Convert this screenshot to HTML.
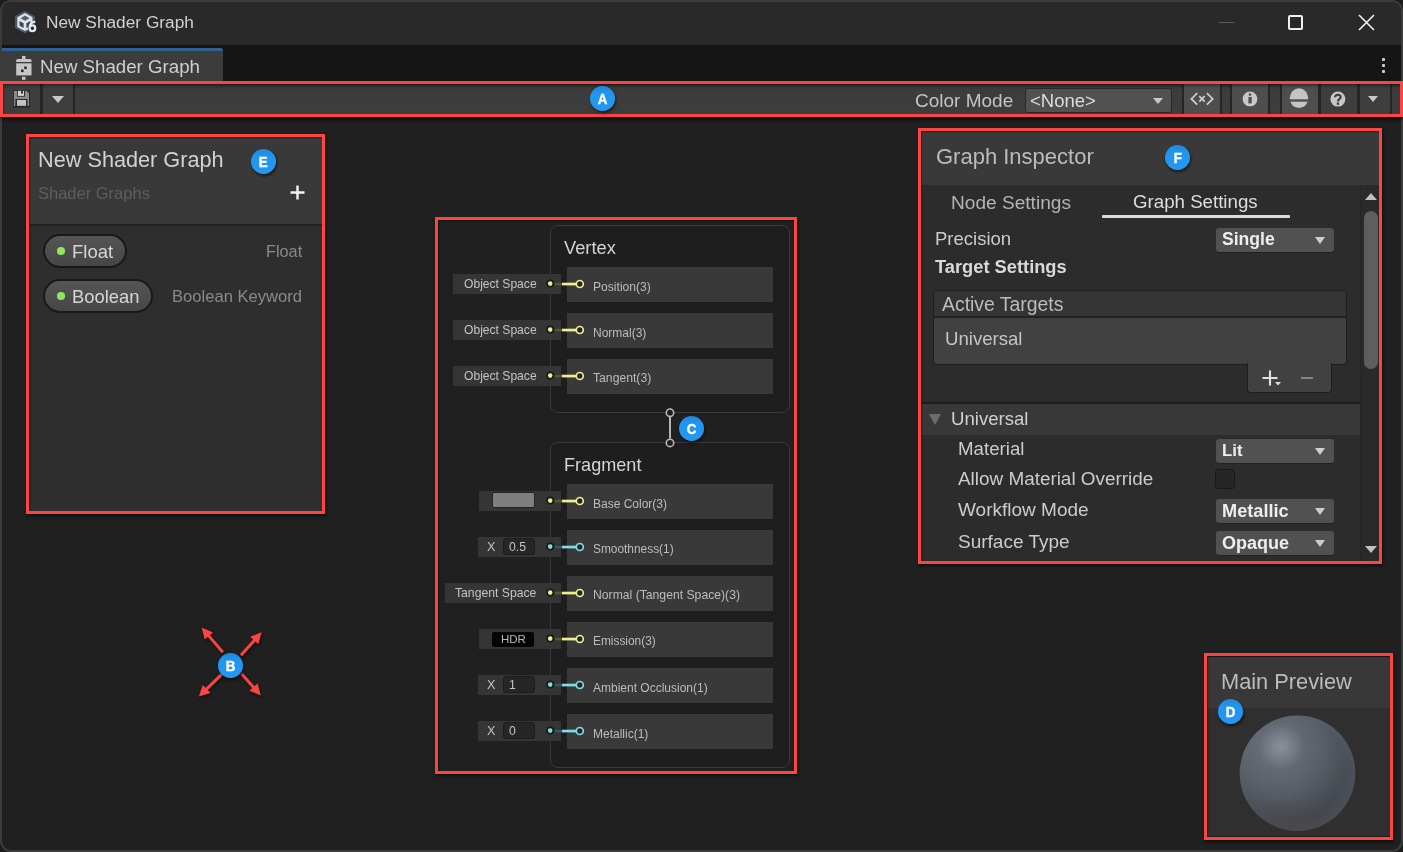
<!DOCTYPE html>
<html><head><meta charset="utf-8"><style>
html,body{margin:0;padding:0;width:1403px;height:852px;overflow:hidden;background:#1c1c1c;}
.r{position:absolute;}
.t{position:absolute;font-family:"Liberation Sans",sans-serif;white-space:pre;-webkit-font-smoothing:antialiased;will-change:transform;}
.badge{position:absolute;width:25px;height:25px;border-radius:50%;background:#2196ee;color:#fff;font-family:"Liberation Sans",sans-serif;font-weight:bold;font-size:15.5px;line-height:26px;text-align:center;-webkit-text-stroke:0.4px #fff;background:linear-gradient(#1f88da,#2196f0 30%,#2298f2);box-shadow:1px 2px 3px rgba(0,0,0,.6);z-index:70;will-change:transform}
.pill{position:absolute;border:2px solid #191919;border-radius:18px;background:linear-gradient(#555,#464646);}
</style></head><body>
<div class="r" style="left:0;top:0;width:1403px;height:852px;background:#3b3b3b;border-radius:11px"></div>
<div class="r" style="left:2px;top:2px;width:1399px;height:848px;background:#202020;border-radius:9px;overflow:hidden"></div>
<div class="r" style="left:2px;top:2px;width:1399px;height:43px;background:#292929;border-radius:9px 9px 0 0"></div>
<div class="t" style="top:14.4px;font-size:17.3px;line-height:17.3px;color:#d0d0d0;left:45.6px;">New Shader Graph</div>
<svg class="r" style="left:12px;top:8px" width="28" height="28" viewBox="12 8 28 28">
<polygon points="25,10.7 34.8,16.3 34.8,28 25,33.2 15,28 15,16.3" fill="#4c5866"/>
<polygon points="25,13 32.5,17.2 32.5,27 25,31 17.3,27 17.3,17.2" fill="#dce3ea"/>
<polygon points="25,15.5 29.5,18.2 25,20.8 20.5,18.2" fill="#56626e"/>
<polygon points="19.6,21 23.6,23.2 23.6,28 19.6,25.8" fill="#3c4650"/>
<polygon points="30.4,21 26.4,23.2 26.4,28 30.4,25.8" fill="#3c4650"/>
<ellipse cx="32.4" cy="28" rx="4.4" ry="4.6" fill="#262626"/>
<path d="M35.3 21.8 C31.5 21.5 29.6 24.5 29.6 27.8 C29.6 30.2 30.8 31.2 32.3 31.2 C34.3 31.2 35.2 29.6 35.2 28 C35.2 26.4 34.2 25.3 32.7 25.3 C31.6 25.3 30.8 25.9 30.4 26.6" stroke="#e6eaee" stroke-width="2.3" fill="none"/>
</svg>
<div class="r" style="left:1219px;top:22px;width:15px;height:1px;background:#5c5c5c;"></div>
<div class="r" style="left:1288px;top:15px;width:11px;height:11px;border:2px solid #f0f0f0;border-radius:2px"></div>
<svg class="r" style="left:1357px;top:13px" width="19" height="19" viewBox="0 0 19 19"><path d="M2 2 L17 17 M17 2 L2 17" stroke="#f0f0f0" stroke-width="1.6"/></svg>
<div class="r" style="left:2px;top:45px;width:1399px;height:36px;background:#151515;"></div>
<div class="r" style="left:2px;top:48px;width:221px;height:33px;background:#3c3c3c;border-radius:0 4px 0 0"></div>
<div class="r" style="left:2px;top:48px;width:221px;height:3px;background:#2e6296;border-radius:0 4px 0 0;"></div>
<div class="t" style="top:58.3px;font-size:18.7px;line-height:18.7px;color:#cfcfcf;left:40.0px;">New Shader Graph</div>
<svg class="r" style="left:12px;top:52px" width="24" height="30" viewBox="12 52 24 30">
<rect x="22" y="55.9" width="3.5" height="3.5" fill="#c6c6c6"/>
<path d="M16.2 61.9 V60.5 Q16.2 58.9 17.8 58.9 H29.9 Q31.5 58.9 31.5 60.5 V61.9 Z" fill="#c6c6c6"/>
<rect x="16.2" y="63.3" width="15.3" height="12.1" fill="#c6c6c6"/>
<rect x="24.2" y="66.5" width="2.6" height="2.6" fill="#2a2a2a"/>
<rect x="21" y="69.5" width="2.6" height="2.6" fill="#2a2a2a"/>
<rect x="22" y="76.8" width="3.5" height="3" fill="#c6c6c6"/>
</svg>
<div class="r" style="left:1382px;top:57.8px;width:3px;height:3px;background:#cfcfcf;border-radius:1px"></div>
<div class="r" style="left:1382px;top:63.8px;width:3px;height:3px;background:#cfcfcf;border-radius:1px"></div>
<div class="r" style="left:1382px;top:69.8px;width:3px;height:3px;background:#cfcfcf;border-radius:1px"></div>
<div class="r" style="left:2px;top:81px;width:1399px;height:36px;background:linear-gradient(#2e2e2e 0px,#2e2e2e 3px,#353535 4px,#3c3c3c 9px,#3d3d3d 100%);"></div>
<div class="r" style="left:2px;top:117px;width:1399px;height:7px;background:linear-gradient(#181818,#202020);"></div>
<div class="r" style="left:3px;top:84px;width:37px;height:30px;background:#3e3e3e;"></div>
<div class="r" style="left:40px;top:84px;width:3px;height:30px;background:#252525;"></div>
<div class="r" style="left:43px;top:84px;width:30px;height:30px;background:#3e3e3e;"></div>
<div class="r" style="left:73px;top:84px;width:2px;height:30px;background:#252525;"></div>
<svg class="r" style="left:8px;top:86px" width="28" height="26" viewBox="8 86 28 26">
<rect x="13" y="90" width="17" height="17.5" fill="#262626"/>
<rect x="13.9" y="90.9" width="15.1" height="15.1" fill="#8c8c8c"/>
<rect x="27.5" y="90.5" width="2" height="2" fill="#262626"/>
<rect x="17" y="90.9" width="8" height="5.8" fill="#2e2e2e"/>
<rect x="17.9" y="90.9" width="6.1" height="5" fill="#d0d0d0"/>
<rect x="21.1" y="90.9" width="1.8" height="2.8" fill="#2e2e2e"/>
<rect x="15.3" y="99" width="12.2" height="8.5" fill="#2a2a2a"/>
<rect x="17" y="100" width="9" height="5.8" fill="#c4c4c4"/>
</svg>
<div class="r" style="left:52px;top:96px;width:0;height:0;border-left:6px solid transparent;border-right:6px solid transparent;border-top:7px solid #c8c8c8"></div>
<div class="t" style="top:90.9px;font-size:19px;line-height:19px;color:#c4c4c4;left:915.4px;">Color Mode</div>
<div class="r" style="left:1024.5px;top:88px;width:145.5px;height:23px;background:#515151;border:1px solid #2a2a2a;border-radius:3px"></div>
<div class="t" style="top:91.9px;font-size:18.5px;line-height:18.5px;color:#dcdcdc;left:1030.3px;">&lt;None&gt;</div>
<div class="r" style="left:1152.5px;top:98px;width:0;height:0;border-left:5.7px solid transparent;border-right:5.7px solid transparent;border-top:6.8px solid #c8c8c8"></div>
<div class="r" style="left:1182px;top:84px;width:2px;height:30px;background:#252525;"></div>
<div class="r" style="left:1184px;top:84px;width:36px;height:30px;background:#4e4e4e;"></div>
<div class="r" style="left:1220px;top:84px;width:2px;height:30px;background:#252525;"></div>
<div class="r" style="left:1230px;top:84px;width:2px;height:30px;background:#252525;"></div>
<div class="r" style="left:1232px;top:84px;width:36px;height:30px;background:#4e4e4e;"></div>
<div class="r" style="left:1268px;top:84px;width:2px;height:30px;background:#252525;"></div>
<div class="r" style="left:1280px;top:84px;width:2px;height:30px;background:#252525;"></div>
<div class="r" style="left:1282px;top:84px;width:36px;height:30px;background:#4e4e4e;"></div>
<div class="r" style="left:1318px;top:84px;width:3px;height:30px;background:#252525;"></div>
<div class="r" style="left:1321px;top:84px;width:36px;height:30px;background:#3e3e3e;"></div>
<div class="r" style="left:1357px;top:84px;width:3px;height:30px;background:#252525;"></div>
<div class="r" style="left:1360px;top:84px;width:30px;height:30px;background:#3e3e3e;"></div>
<div class="r" style="left:1390px;top:84px;width:2px;height:30px;background:#252525;"></div>
<svg class="r" style="left:1184px;top:84px" width="36" height="30" viewBox="1184 84 36 30">
<path d="M1197.2 93.1 L1191.4 98.9 L1197.2 104.7 M1206.9 93.1 L1212.7 98.9 L1206.9 104.7" stroke="#cfcfcf" stroke-width="1.7" fill="none"/>
<path d="M1199.3 96.2 L1204.7 101.6 M1204.7 96.2 L1199.3 101.6" stroke="#cfcfcf" stroke-width="1.8" fill="none"/>
</svg>
<svg class="r" style="left:1232px;top:84px" width="36" height="30" viewBox="1232 84 36 30">
<circle cx="1250" cy="98.9" r="7.4" fill="#c8c8c8"/>
<circle cx="1250" cy="94.6" r="1.3" fill="#4f4f4f"/>
<rect x="1248.4" y="97" width="3.3" height="6.4" fill="#4f4f4f"/>
</svg>
<svg class="r" style="left:1282px;top:84px" width="36" height="30" viewBox="1282 84 36 30">
<ellipse cx="1299" cy="98.2" rx="9.2" ry="9.9" fill="#c4c4c4"/>
<rect x="1288" y="99.3" width="22" height="2.4" fill="#4f4f4f"/>
</svg>
<svg class="r" style="left:1321px;top:84px" width="36" height="30" viewBox="1321 84 36 30">
<circle cx="1337.9" cy="99.1" r="7.5" fill="#c8c8c8"/>
<path d="M1335.1 97.3 C1335.1 94 1340.7 94 1340.7 97.1 C1340.7 99.2 1337.9 99.1 1337.9 101.4" stroke="#3e3e3e" stroke-width="2.1" fill="none"/>
<rect x="1336.8" y="102.6" width="2.3" height="2.2" fill="#3e3e3e"/>
</svg>
<div class="r" style="left:1368.3px;top:96px;width:0;height:0;border-left:5.7px solid transparent;border-right:5.7px solid transparent;border-top:6.8px solid #c8c8c8"></div>
<div class="r" style="left:3px;top:84px;width:1397px;height:5px;background:linear-gradient(rgba(0,0,0,.2),rgba(0,0,0,0));"></div>
<div class="r" style="left:29px;top:137px;width:293px;height:87px;background:#393939;"></div>
<div class="r" style="left:29px;top:224px;width:293px;height:2px;background:#232323;"></div>
<div class="r" style="left:29px;top:226px;width:293px;height:285px;background:#2e2e2e;"></div>
<div class="t" style="top:148.7px;font-size:21.7px;line-height:21.7px;color:#d2d2d2;left:38.2px;">New Shader Graph</div>
<div class="t" style="top:185.0px;font-size:16.5px;line-height:16.5px;color:#5e5e5e;left:37.5px;">Shader Graphs</div>
<svg class="r" style="left:290px;top:185px" width="15" height="15" viewBox="0 0 15 15"><path d="M7.5 0.5 V14.5 M0.5 7.5 H14.5" stroke="#f4f4f4" stroke-width="2.4"/></svg>
<div class="pill" style="left:43px;top:234px;width:80px;height:30px"></div>
<div class="r" style="left:57px;top:247.2px;width:7.5px;height:7.5px;border-radius:50%;background:#8ee65e"></div>
<div class="t" style="top:242.5px;font-size:18.5px;line-height:18.5px;color:#d6d6d6;left:71.5px;">Float</div>
<div class="pill" style="left:43px;top:279px;width:106px;height:30px"></div>
<div class="r" style="left:57px;top:292.2px;width:7.5px;height:7.5px;border-radius:50%;background:#8ee65e"></div>
<div class="t" style="top:287.6px;font-size:18.4px;line-height:18.4px;color:#d6d6d6;left:71.5px;">Boolean</div>
<div class="t" style="top:243.3px;font-size:16.3px;line-height:16.3px;color:#8a8a8a;right:1101.0px;text-align:right;">Float</div>
<div class="t" style="top:288.7px;font-size:16.6px;line-height:16.6px;color:#8a8a8a;left:172.0px;">Boolean Keyword</div>
<div class="r" style="left:550px;top:225px;width:238px;height:186px;border:1px solid #3a3a3a;border-radius:8px;background:#1e1e1e"></div>
<div class="r" style="left:550px;top:442px;width:238px;height:324px;border:1px solid #3a3a3a;border-radius:8px;background:#1e1e1e"></div>
<div class="t" style="top:238.5px;font-size:18.3px;line-height:18.3px;color:#d4d4d4;left:564.0px;">Vertex</div>
<div class="t" style="top:455.8px;font-size:18.1px;line-height:18.1px;color:#d4d4d4;left:564.0px;">Fragment</div>
<div class="r" style="left:567px;top:267px;width:206px;height:35px;background:#393939;"></div>
<div class="r" style="left:453px;top:274px;width:108px;height:20px;background:#353535;"></div>
<div class="t" style="top:277.7px;font-size:12.1px;line-height:12.1px;color:#c4c4c4;right:866.0px;text-align:right;">Object Space</div>
<svg class="r" style="left:540px;top:274px" width="50" height="20" viewBox="540 274 50 20">
<rect x="555" y="282.8" width="7" height="2.5" fill="#55553f"/>
<rect x="562" y="282.7" width="14" height="2.7" fill="#eeee90"/>
<circle cx="550.2" cy="283.6" r="4" fill="#181818"/>
<circle cx="550.2" cy="283.6" r="2.3" fill="#eeee90"/>
<circle cx="579.8" cy="284" r="3.5" fill="#262626" stroke="#eeee90" stroke-width="1.7"/>
</svg>
<div class="t" style="top:280.5px;font-size:12.1px;line-height:12.1px;color:#bcbcbc;left:593.2px;">Position(3)</div>
<div class="r" style="left:567px;top:313px;width:206px;height:35px;background:#393939;"></div>
<div class="r" style="left:453px;top:320px;width:108px;height:20px;background:#353535;"></div>
<div class="t" style="top:323.7px;font-size:12.1px;line-height:12.1px;color:#c4c4c4;right:866.0px;text-align:right;">Object Space</div>
<svg class="r" style="left:540px;top:320px" width="50" height="20" viewBox="540 320 50 20">
<rect x="555" y="328.8" width="7" height="2.5" fill="#55553f"/>
<rect x="562" y="328.7" width="14" height="2.7" fill="#eeee90"/>
<circle cx="550.2" cy="329.6" r="4" fill="#181818"/>
<circle cx="550.2" cy="329.6" r="2.3" fill="#eeee90"/>
<circle cx="579.8" cy="330" r="3.5" fill="#262626" stroke="#eeee90" stroke-width="1.7"/>
</svg>
<div class="t" style="top:326.6px;font-size:12.0px;line-height:12.0px;color:#bcbcbc;left:593.2px;">Normal(3)</div>
<div class="r" style="left:567px;top:359px;width:206px;height:35px;background:#393939;"></div>
<div class="r" style="left:453px;top:366px;width:108px;height:20px;background:#353535;"></div>
<div class="t" style="top:369.7px;font-size:12.1px;line-height:12.1px;color:#c4c4c4;right:866.0px;text-align:right;">Object Space</div>
<svg class="r" style="left:540px;top:366px" width="50" height="20" viewBox="540 366 50 20">
<rect x="555" y="374.8" width="7" height="2.5" fill="#55553f"/>
<rect x="562" y="374.7" width="14" height="2.7" fill="#eeee90"/>
<circle cx="550.2" cy="375.6" r="4" fill="#181818"/>
<circle cx="550.2" cy="375.6" r="2.3" fill="#eeee90"/>
<circle cx="579.8" cy="376" r="3.5" fill="#262626" stroke="#eeee90" stroke-width="1.7"/>
</svg>
<div class="t" style="top:372.4px;font-size:12.2px;line-height:12.2px;color:#bcbcbc;left:593.2px;">Tangent(3)</div>
<div class="r" style="left:567px;top:484px;width:206px;height:35px;background:#393939;"></div>
<div class="r" style="left:479px;top:491px;width:82px;height:20px;background:#353535;"></div>
<div class="r" style="left:492px;top:492px;width:41px;height:14px;background:#7f7f7f;border:1px solid #242424;border-radius:2px"></div>
<svg class="r" style="left:540px;top:491px" width="50" height="20" viewBox="540 491 50 20">
<rect x="555" y="499.8" width="7" height="2.5" fill="#55553f"/>
<rect x="562" y="499.7" width="14" height="2.7" fill="#eeee90"/>
<circle cx="550.2" cy="500.6" r="4" fill="#181818"/>
<circle cx="550.2" cy="500.6" r="2.3" fill="#eeee90"/>
<circle cx="579.8" cy="501" r="3.5" fill="#262626" stroke="#eeee90" stroke-width="1.7"/>
</svg>
<div class="t" style="top:497.6px;font-size:12.0px;line-height:12.0px;color:#bcbcbc;left:593.2px;">Base Color(3)</div>
<div class="r" style="left:567px;top:530px;width:206px;height:35px;background:#393939;"></div>
<div class="r" style="left:478px;top:537px;width:83px;height:20px;background:#353535;"></div>
<div class="t" style="top:540.7px;font-size:12.6px;line-height:12.6px;color:#c4c4c4;left:487.3px;">X</div>
<div class="r" style="left:503px;top:538px;width:30px;height:15px;background:#262626;border:1px solid #1c1c1c;border-radius:3px"></div>
<div class="t" style="top:541.0px;font-size:12.2px;line-height:12.2px;color:#c4c4c4;left:508.6px;">0.5</div>
<svg class="r" style="left:540px;top:537px" width="50" height="20" viewBox="540 537 50 20">
<rect x="555" y="545.8" width="7" height="2.5" fill="#3f5557"/>
<rect x="562" y="545.7" width="14" height="2.7" fill="#7fdde6"/>
<circle cx="550.2" cy="546.6" r="4" fill="#181818"/>
<circle cx="550.2" cy="546.6" r="2.3" fill="#7fdde6"/>
<circle cx="579.8" cy="547" r="3.5" fill="#262626" stroke="#7fdde6" stroke-width="1.7"/>
</svg>
<div class="t" style="top:543.7px;font-size:11.9px;line-height:11.9px;color:#bcbcbc;left:593.2px;">Smoothness(1)</div>
<div class="r" style="left:567px;top:576px;width:206px;height:35px;background:#393939;"></div>
<div class="r" style="left:444.5px;top:583px;width:116.5px;height:20px;background:#353535;"></div>
<div class="t" style="top:586.6px;font-size:12.2px;line-height:12.2px;color:#c4c4c4;right:866.7px;text-align:right;">Tangent Space</div>
<svg class="r" style="left:540px;top:583px" width="50" height="20" viewBox="540 583 50 20">
<rect x="555" y="591.8" width="7" height="2.5" fill="#55553f"/>
<rect x="562" y="591.7" width="14" height="2.7" fill="#eeee90"/>
<circle cx="550.2" cy="592.6" r="4" fill="#181818"/>
<circle cx="550.2" cy="592.6" r="2.3" fill="#eeee90"/>
<circle cx="579.8" cy="593" r="3.5" fill="#262626" stroke="#eeee90" stroke-width="1.7"/>
</svg>
<div class="t" style="top:589.4px;font-size:12.2px;line-height:12.2px;color:#bcbcbc;left:593.2px;">Normal (Tangent Space)(3)</div>
<div class="r" style="left:567px;top:622px;width:206px;height:35px;background:#393939;"></div>
<div class="r" style="left:479px;top:629px;width:82px;height:20px;background:#353535;"></div>
<div class="r" style="left:492px;top:631.5px;width:42px;height:15px;background:#050505;border-radius:2px"></div>
<div class="t" style="top:634.0px;font-size:11.5px;line-height:11.5px;color:#b8b8b8;left:501.2px;">HDR</div>
<svg class="r" style="left:540px;top:629px" width="50" height="20" viewBox="540 629 50 20">
<rect x="555" y="637.8" width="7" height="2.5" fill="#55553f"/>
<rect x="562" y="637.7" width="14" height="2.7" fill="#eeee90"/>
<circle cx="550.2" cy="638.6" r="4" fill="#181818"/>
<circle cx="550.2" cy="638.6" r="2.3" fill="#eeee90"/>
<circle cx="579.8" cy="639" r="3.5" fill="#262626" stroke="#eeee90" stroke-width="1.7"/>
</svg>
<div class="t" style="top:635.7px;font-size:11.9px;line-height:11.9px;color:#bcbcbc;left:593.2px;">Emission(3)</div>
<div class="r" style="left:567px;top:668px;width:206px;height:35px;background:#393939;"></div>
<div class="r" style="left:478px;top:675px;width:83px;height:20px;background:#353535;"></div>
<div class="t" style="top:678.7px;font-size:12.6px;line-height:12.6px;color:#c4c4c4;left:487.3px;">X</div>
<div class="r" style="left:503px;top:676px;width:30px;height:15px;background:#262626;border:1px solid #1c1c1c;border-radius:3px"></div>
<div class="t" style="top:679.0px;font-size:12.2px;line-height:12.2px;color:#c4c4c4;left:508.6px;">1</div>
<svg class="r" style="left:540px;top:675px" width="50" height="20" viewBox="540 675 50 20">
<rect x="555" y="683.8" width="7" height="2.5" fill="#3f5557"/>
<rect x="562" y="683.7" width="14" height="2.7" fill="#7fdde6"/>
<circle cx="550.2" cy="684.6" r="4" fill="#181818"/>
<circle cx="550.2" cy="684.6" r="2.3" fill="#7fdde6"/>
<circle cx="579.8" cy="685" r="3.5" fill="#262626" stroke="#7fdde6" stroke-width="1.7"/>
</svg>
<div class="t" style="top:681.6px;font-size:12.0px;line-height:12.0px;color:#bcbcbc;left:593.2px;">Ambient Occlusion(1)</div>
<div class="r" style="left:567px;top:714px;width:206px;height:35px;background:#393939;"></div>
<div class="r" style="left:478px;top:721px;width:83px;height:20px;background:#353535;"></div>
<div class="t" style="top:724.7px;font-size:12.6px;line-height:12.6px;color:#c4c4c4;left:487.3px;">X</div>
<div class="r" style="left:503px;top:722px;width:30px;height:15px;background:#262626;border:1px solid #1c1c1c;border-radius:3px"></div>
<div class="t" style="top:725.0px;font-size:12.2px;line-height:12.2px;color:#c4c4c4;left:508.6px;">0</div>
<svg class="r" style="left:540px;top:721px" width="50" height="20" viewBox="540 721 50 20">
<rect x="555" y="729.8" width="7" height="2.5" fill="#3f5557"/>
<rect x="562" y="729.7" width="14" height="2.7" fill="#7fdde6"/>
<circle cx="550.2" cy="730.6" r="4" fill="#181818"/>
<circle cx="550.2" cy="730.6" r="2.3" fill="#7fdde6"/>
<circle cx="579.8" cy="731" r="3.5" fill="#262626" stroke="#7fdde6" stroke-width="1.7"/>
</svg>
<div class="t" style="top:727.6px;font-size:12.0px;line-height:12.0px;color:#bcbcbc;left:593.2px;">Metallic(1)</div>
<svg class="r" style="left:660px;top:402px" width="20" height="51" viewBox="0 0 20 51">
<path d="M10 14.5 V36.5" stroke="#b4b4b4" stroke-width="2"/>
<circle cx="10" cy="10.7" r="3.7" stroke="#b8b8b8" stroke-width="1.6" fill="#1e1e1e"/>
<circle cx="10" cy="40.9" r="3.7" stroke="#b8b8b8" stroke-width="1.6" fill="#1e1e1e"/>
</svg>
<div class="r" style="left:921px;top:131px;width:458px;height:54px;background:#393939;"></div>
<div class="r" style="left:921px;top:185px;width:458px;height:376px;background:#2c2c2c;"></div>
<div class="r" style="left:1360px;top:185px;width:19px;height:376px;background:#2a2a2a;border-left:1px solid #262626;"></div>
<div class="t" style="top:146.3px;font-size:22px;line-height:22px;color:#bcbcbc;left:935.8px;">Graph Inspector</div>
<div class="t" style="top:193.0px;font-size:19.1px;line-height:19.1px;color:#b4b4b4;left:950.8px;">Node Settings</div>
<div class="t" style="top:193.3px;font-size:18.7px;line-height:18.7px;color:#dedede;left:1132.7px;">Graph Settings</div>
<div class="r" style="left:1102px;top:215px;width:188px;height:3px;background:#dcdcdc;border-radius:1px;"></div>
<div class="r" style="left:1365px;top:193px;width:0;height:0;border-left:6px solid transparent;border-right:6px solid transparent;border-bottom:7px solid #c0c0c0"></div>
<div class="r" style="left:1364px;top:211px;width:14px;height:158px;background:#5e5e5e;border-radius:7px"></div>
<div class="r" style="left:1365px;top:546px;width:0;height:0;border-left:6px solid transparent;border-right:6px solid transparent;border-top:7px solid #c0c0c0"></div>
<div class="t" style="top:229.8px;font-size:18.5px;line-height:18.5px;color:#cccccc;left:934.6px;">Precision</div>
<div class="r" style="left:1216px;top:228px;width:118px;height:24px;background:#515151;border-radius:3px;box-shadow:0 1px 0 #202020"></div>
<div class="t" style="top:231.4px;font-size:17.6px;line-height:17.6px;color:#eeeeee;left:1221.6px;font-weight:bold;">Single</div>
<div class="r" style="left:1314.5px;top:236.5px;width:0;height:0;border-left:5.5px solid transparent;border-right:5.5px solid transparent;border-bottom:0;border-top:7px solid #cfcfcf"></div>
<div class="t" style="top:258.4px;font-size:18.3px;line-height:18.3px;color:#dadada;left:935.2px;font-weight:bold;">Target Settings</div>
<div class="r" style="left:933px;top:290px;width:412px;height:73px;background:#414141;border:1px solid #1e1e1e;border-radius:4px"></div>
<div class="r" style="left:934px;top:291px;width:412px;height:25px;background:#343434;border-bottom:2px solid #222222;border-radius:3px 3px 0 0"></div>
<div class="t" style="top:294.7px;font-size:19.4px;line-height:19.4px;color:#bcbcbc;left:942.3px;">Active Targets</div>
<div class="t" style="top:330.2px;font-size:18.6px;line-height:18.6px;color:#c4c4c4;left:944.5px;">Universal</div>
<div class="r" style="left:1247px;top:363px;width:83px;height:29px;background:#414141;border:1px solid #1e1e1e;border-top:none;border-radius:0 0 4px 4px"></div>
<div class="r" style="left:1248px;top:361px;width:82px;height:4px;background:#414141;"></div>
<svg class="r" style="left:1261px;top:369px" width="26" height="20" viewBox="0 0 26 20"><path d="M9 1.5 V16.5 M1.5 9 H16.5" stroke="#e2e2e2" stroke-width="2.1"/><path d="M14 13 L20 13 L17 16.5 Z" fill="#dddddd"/></svg>
<div class="r" style="left:1301px;top:377px;width:12px;height:2px;background:#858585;"></div>
<div class="r" style="left:921px;top:402px;width:439px;height:2px;background:#1e1e1e;"></div>
<div class="r" style="left:921px;top:404px;width:439px;height:31px;background:#383838;"></div>
<div class="r" style="left:929px;top:414px;width:0;height:0;border-left:6px solid transparent;border-right:6px solid transparent;border-top:11px solid #6c6c6c"></div>
<div class="t" style="top:409.8px;font-size:18.6px;line-height:18.6px;color:#d0d0d0;left:950.8px;">Universal</div>
<div class="t" style="top:440.2px;font-size:18.7px;line-height:18.7px;color:#cccccc;left:957.8px;">Material</div>
<div class="t" style="top:470.0px;font-size:18.9px;line-height:18.9px;color:#cccccc;left:957.8px;">Allow Material Override</div>
<div class="t" style="top:500.0px;font-size:19.0px;line-height:19.0px;color:#cccccc;left:957.8px;">Workflow Mode</div>
<div class="t" style="top:532.0px;font-size:19.0px;line-height:19.0px;color:#cccccc;left:957.8px;">Surface Type</div>
<div class="r" style="left:1216px;top:439px;width:118px;height:24px;background:#515151;border-radius:3px;box-shadow:0 1px 0 #202020"></div>
<div class="t" style="top:443.1px;font-size:16.8px;line-height:16.8px;color:#eeeeee;left:1221.6px;font-weight:bold;">Lit</div>
<div class="r" style="left:1314.5px;top:447.5px;width:0;height:0;border-left:5.5px solid transparent;border-right:5.5px solid transparent;border-bottom:0;border-top:7px solid #cfcfcf"></div>
<div class="r" style="left:1214.5px;top:469px;width:18px;height:18px;background:#262626;border:1px solid #191919;border-radius:3px"></div>
<div class="r" style="left:1216px;top:499px;width:118px;height:24px;background:#515151;border-radius:3px;box-shadow:0 1px 0 #202020"></div>
<div class="t" style="top:501.9px;font-size:18.2px;line-height:18.2px;color:#eeeeee;left:1221.6px;font-weight:bold;">Metallic</div>
<div class="r" style="left:1314.5px;top:507.5px;width:0;height:0;border-left:5.5px solid transparent;border-right:5.5px solid transparent;border-bottom:0;border-top:7px solid #cfcfcf"></div>
<div class="r" style="left:1216px;top:531px;width:118px;height:24px;background:#515151;border-radius:3px;box-shadow:0 1px 0 #202020"></div>
<div class="t" style="top:534.1px;font-size:18.0px;line-height:18.0px;color:#eeeeee;left:1221.6px;font-weight:bold;">Opaque</div>
<div class="r" style="left:1314.5px;top:539.5px;width:0;height:0;border-left:5.5px solid transparent;border-right:5.5px solid transparent;border-bottom:0;border-top:7px solid #cfcfcf"></div>
<div class="r" style="left:1207px;top:657px;width:183px;height:51px;background:#383838;"></div>
<div class="r" style="left:1207px;top:708px;width:183px;height:128px;background:#2f2f2f;"></div>
<div class="t" style="top:670.9px;font-size:21.8px;line-height:21.8px;color:#bcbcbc;left:1221.0px;">Main Preview</div>
<svg class="r" style="left:1238px;top:714px" width="120" height="120" viewBox="0 0 120 120">
<defs>
<radialGradient id="sph" cx="0.33" cy="0.27" r="0.9">
<stop offset="0" stop-color="#6e747e"/>
<stop offset="0.4" stop-color="#5b6169"/>
<stop offset="0.75" stop-color="#43484f"/>
<stop offset="1" stop-color="#3b3f46"/>
</radialGradient>
<radialGradient id="hl" cx="0.36" cy="0.27" r="0.2">
<stop offset="0" stop-color="#a0a5ad" stop-opacity="0.55"/>
<stop offset="1" stop-color="#a0a5ad" stop-opacity="0"/>
</radialGradient>
<radialGradient id="rim" cx="0.45" cy="0.45" r="0.55">
<stop offset="0.8" stop-color="#6b7888" stop-opacity="0"/>
<stop offset="1" stop-color="#6b7888" stop-opacity="0.22"/>
</radialGradient>
<linearGradient id="bot" x1="0" y1="0" x2="0" y2="1">
<stop offset="0.7" stop-color="#4a4040" stop-opacity="0"/>
<stop offset="1" stop-color="#4a4040" stop-opacity="0.45"/>
</linearGradient>
</defs>
<circle cx="59.5" cy="59.2" r="57.8" fill="url(#sph)"/>
<circle cx="59.5" cy="59.2" r="57.8" fill="url(#rim)"/>
<circle cx="59.5" cy="59.2" r="57.8" fill="url(#bot)"/>
<circle cx="59.5" cy="59.2" r="57.8" fill="url(#hl)"/>
</svg>
<svg class="r" style="left:180px;top:610px;z-index:60;filter:drop-shadow(1px 2px 1.5px rgba(0,0,0,.5))" width="100" height="100" viewBox="180 610 100 100"><path d="M222.8 652.3 L207.5 634.4" stroke="#fb4444" stroke-width="3" fill="none"/><polygon points="201.7,627.6 213.0,632.4 204.7,639.5" fill="#fb4444"/><path d="M241.0 655.2 L255.6 639.0" stroke="#fb4444" stroke-width="3" fill="none"/><polygon points="261.6,632.3 258.3,644.2 250.2,636.8" fill="#fb4444"/><path d="M221.7 674.3 L205.2 690.3" stroke="#fb4444" stroke-width="3" fill="none"/><polygon points="198.8,696.6 202.8,685.0 210.5,692.9" fill="#fb4444"/><path d="M241.3 673.4 L254.8 688.7" stroke="#fb4444" stroke-width="3" fill="none"/><polygon points="260.8,695.4 249.4,690.8 257.6,683.5" fill="#fb4444"/></svg>
<div class="r" style="left:0px;top:81px;width:1397px;height:30px;border:3px solid #fb4444;box-shadow:1px 2px 3px rgba(0,0,0,.55), inset 1px 1px 2px rgba(0,0,0,.35);z-index:50"></div>
<div class="r" style="left:26px;top:134px;width:293px;height:374px;border:3px solid #fb4444;box-shadow:1px 2px 3px rgba(0,0,0,.55), inset 1px 1px 2px rgba(0,0,0,.35);z-index:50"></div>
<div class="r" style="left:435px;top:217px;width:356px;height:551px;border:3px solid #fb4444;box-shadow:1px 2px 3px rgba(0,0,0,.55), inset 1px 1px 2px rgba(0,0,0,.35);z-index:50"></div>
<div class="r" style="left:918px;top:128px;width:458px;height:430px;border:3px solid #fb4444;box-shadow:1px 2px 3px rgba(0,0,0,.55), inset 1px 1px 2px rgba(0,0,0,.35);z-index:50"></div>
<div class="r" style="left:1204px;top:653px;width:183px;height:181px;border:3px solid #fb4444;box-shadow:1px 2px 3px rgba(0,0,0,.55), inset 1px 1px 2px rgba(0,0,0,.35);z-index:50"></div>
<div class="badge" style="left:590.0px;top:86.0px"><span style="display:inline-block;transform:scaleX(.86)">A</span></div>
<div class="badge" style="left:218.0px;top:652.9px"><span style="display:inline-block;transform:scaleX(.86)">B</span></div>
<div class="badge" style="left:678.9px;top:416.0px"><span style="display:inline-block;transform:scaleX(.86)">C</span></div>
<div class="badge" style="left:1218.0px;top:698.9px"><span style="display:inline-block;transform:scaleX(.86)">D</span></div>
<div class="badge" style="left:251.0px;top:148.5px"><span style="display:inline-block;transform:scaleX(.86)">E</span></div>
<div class="badge" style="left:1164.8px;top:144.8px"><span style="display:inline-block;transform:scaleX(.86)">F</span></div>
</body></html>
